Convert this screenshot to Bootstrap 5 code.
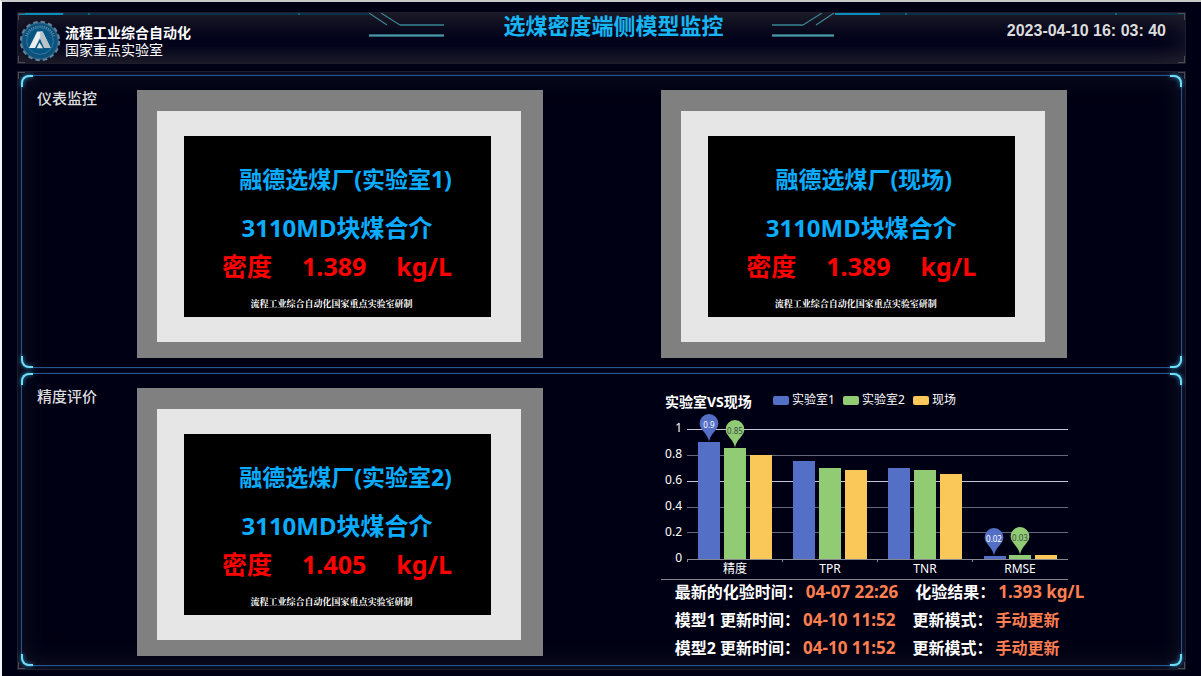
<!DOCTYPE html>
<html lang="zh-CN">
<head>
<meta charset="utf-8">
<meta name="viewport" content="width=device-width, initial-scale=1">
<title>选煤密度端侧模型监控</title>
<link href="https://cdn.jsdelivr.net/npm/bootstrap@5.3.0/dist/css/bootstrap.min.css" rel="stylesheet">
<style>
  body {
    background: #000014;
    color: #fff;
    font-family: "Noto Sans", "Noto Sans CJK SC", sans-serif;
    border-top: 2px solid #c9cacc;
    border-left: 2px solid #f4f5f5;
  }
  .screen-page { padding: 10px 15px 7px; gap: 7px; }

  /* framed areas with a faint inner glow */
  .glow-frame {
    border: 1px solid #1d1d2b;
    box-shadow: inset 0 0 28px rgba(50, 50, 66, .5);
    position: relative;
  }
  .glow-frame::before {
    content: "";
    position: absolute;
    inset: 0;
    pointer-events: none;
    --c: #4b4b55;
    background:
      linear-gradient(var(--c), var(--c)) 0 0 / 7px 1px, linear-gradient(var(--c), var(--c)) 0 0 / 1px 7px,
      linear-gradient(var(--c), var(--c)) 100% 0 / 7px 1px, linear-gradient(var(--c), var(--c)) 100% 0 / 1px 7px,
      linear-gradient(var(--c), var(--c)) 0 100% / 7px 1px, linear-gradient(var(--c), var(--c)) 0 100% / 1px 7px,
      linear-gradient(var(--c), var(--c)) 100% 100% / 7px 1px, linear-gradient(var(--c), var(--c)) 100% 100% / 1px 7px;
    background-repeat: no-repeat;
  }

  .top-bar {
    height: 52px;
    background: linear-gradient(#131320, #02021a 50%, #02021a 65%, #131320);
  }
  .bar-side { flex: 1 1 0; }
  .bar-left, .bar-right {
    background:
      linear-gradient(#0a8fbd, #0a8fbd) 0 0 / 45px 2px,
      linear-gradient(#0d6584, #0d6584) 70px 0 / 2px 2px,
      linear-gradient(#0d6584, #0d6584) 280px 0 / 2px 2px,
      linear-gradient(#0b3146, #0b3146) 0 0 / 100% 2px;
    background-repeat: no-repeat;
  }
  .brand-name { font-size: 14px; line-height: 17px; }
  .brand-text { padding-top: 11px; }
  .brand-logo { margin: 7px 4px 0 1px; }
  .bar-title { font-size: 22px; line-height: 24px; color: #16b6f4; margin: 0 48px 0 60px; }
  .bar-clock {
    font: bold 16px/20px "Liberation Sans", Arial, sans-serif;
    color: #dcdcdc;
    padding: 8px 19px 0 0;
  }

  .board { padding: 3px; gap: 5px; }
  .panel-box {
    position: relative;
    border: 1px solid #265590;
    border-radius: 8px;
    padding: 14px 0 9px;
    box-shadow: 0 0 2px #12305c;
  }
  .panel-box > .row { margin: 0 -4px 0 -2px; }
  .corner {
    position: absolute;
    width: 12px;
    height: 12px;
    border: 0 solid #6fdcf5;
    filter: drop-shadow(0 0 2px #2fa6cf);
  }
  .corner-tl { left: -1px; top: -1px; border-width: 2px 0 0 2px; border-top-left-radius: 8px; }
  .corner-tr { right: -1px; top: -1px; border-width: 2px 2px 0 0; border-top-right-radius: 8px; }
  .corner-bl { left: -1px; bottom: -1px; border-width: 0 0 2px 2px; border-bottom-left-radius: 8px; }
  .corner-br { right: -1px; bottom: -1px; border-width: 0 2px 2px 0; border-bottom-right-radius: 8px; }

  .col-tag { flex: 0 0 10%; }
  .col-unit { flex: 0 0 45%; }
  .panel-name { font-size: 15px; line-height: 16px; color: #dcdcdc; padding-left: 17px; }

  /* instrument housing */
  .meter { max-width: 406px; background: #808080; padding: 21px 22px 16px 20px; }
  .meter-bezel { background: #e6e6e6; padding: 25px 30px 25px 27px; }
  .meter-lcd { background: #000; height: 181px; padding-top: 24px; white-space: nowrap; }
  .lcd-site { font-size: 23px; line-height: 38px; color: #0aacff; padding-left: 5px; }
  .lcd-site-lab { padding-left: 17px; }
  .lcd-item { font-size: 24px; line-height: 38px; color: #0aacff; padding-top: 11px; }
  .lcd-value { font-size: 25px; line-height: 38px; color: #f00; gap: 30px; }
  .lcd-maker { font-size: 9px; line-height: 14px; font-family: "Noto Serif CJK SC", "Liberation Serif", "Noto Sans CJK SC", serif; padding-top: 12px; padding-right: 11px; }

  .chart-wrap { max-width: 407px; border-bottom: 1px solid #85858a; }
  .chart-wrap svg { width: 100%; height: auto; }
  .run-info { font-size: 16px; line-height: 28px; padding-left: 14px; white-space: nowrap; margin-top: -2px; margin-bottom: -10px; }
  .run-info .val { font-size: 17px; color: #ff7f50; margin-left: 3px; }
  .run-info .val-mode { font-size: 16px; }
  .run-info .pair { margin-right: 17px; }
</style>
</head>
<body>
<div class="screen-page d-flex flex-column">

  <header class="glow-frame top-bar d-flex">
    <div class="bar-side bar-left d-flex align-items-start">
      <svg class="brand-logo flex-shrink-0" width="42" height="42" viewBox="0 0 42 42" aria-hidden="true">
        <circle cx="21" cy="21" r="19" fill="#0b4a70"/>
        <circle cx="21" cy="21" r="19" fill="none" stroke="#63819a" stroke-width="2.4" stroke-dasharray="4.5 2.96"/>
        <circle cx="21" cy="21" r="18" fill="#0b527c" stroke="#42708f" stroke-width=".8"/>
        <path d="M7 16A15 15 0 0 1 35 16" fill="none" stroke="#7ea5bb" stroke-width="1.800" stroke-dasharray="1 1.200" stroke-opacity=".8"/>
        <circle cx="21" cy="21" r="13.400" fill="#075582" stroke="#4b83a3" stroke-width=".7"/>
        <path d="M18.200 11.500h5.400l8 16.500h-6.300L21 18.300 16 28H10z" fill="#e9edf0"/>
        <path d="M21 18.300 25.300 28h6.300L23.600 11.500h-2.200z" fill="#b9c3ca"/>
        <path d="M20.500 22.500 24 28.200H17.600z" fill="#dfe5e9"/>
      </svg>
      <div class="brand-text">
        <div class="brand-name fw-bold">流程工业综合自动化</div>
        <div class="brand-name">国家重点实验室</div>
      </div>
    </div>
    <svg class="flex-shrink-0" width="75" height="26" viewBox="0 0 75 26" fill="none" aria-hidden="true">
      <path d="M0 0 18 12M12 0 31 12" stroke="#3e8391" stroke-width="1.200"/>
      <path d="M31 12H75" stroke="#2c6576" stroke-width="2"/>
      <path d="M0 22.500H75" stroke="#2c6576" stroke-width="3"/>
      <path d="M0 22.500H75" stroke="#4b96a2"/>
    </svg>
    <h1 class="bar-title fw-bold flex-shrink-0">选煤密度端侧模型监控</h1>
    <svg class="flex-shrink-0" width="63" height="26" viewBox="0 0 63 26" fill="none" aria-hidden="true">
      <path d="M62 0 44 12M50 0 31 12" stroke="#3e8391" stroke-width="1.200"/>
      <path d="M0 12H31" stroke="#2c6576" stroke-width="2"/>
      <path d="M0 22.500H62" stroke="#2c6576" stroke-width="3"/>
      <path d="M0 22.500H62" stroke="#4b96a2"/>
    </svg>
    <div class="bar-side bar-right text-end">
      <time class="bar-clock d-block" datetime="2023-04-10T16:03:40">2023-04-10 16: 03: 40</time>
    </div>
  </header>

  <main class="glow-frame board d-flex flex-column">
    <section class="panel-box">
      <span class="corner corner-tl"></span><span class="corner corner-tr"></span><span class="corner corner-bl"></span><span class="corner corner-br"></span>
      <div class="row g-0">
        <div class="col-tag"><h2 class="panel-name m-0">仪表监控</h2></div>
        <div class="col-unit">
          <div class="meter"><div class="meter-bezel"><div class="meter-lcd text-center fw-bold">
            <div class="lcd-site lcd-site-lab">融德选煤厂(实验室1)</div>
            <div class="lcd-item">3110MD块煤合介</div>
            <div class="lcd-value d-flex justify-content-center"><span>密度</span><span>1.389</span><span>kg/L</span></div>
            <div class="lcd-maker">流程工业综合自动化国家重点实验室研制</div>
          </div></div></div>
        </div>
        <div class="col-unit">
          <div class="meter"><div class="meter-bezel"><div class="meter-lcd text-center fw-bold">
            <div class="lcd-site">融德选煤厂(现场)</div>
            <div class="lcd-item">3110MD块煤合介</div>
            <div class="lcd-value d-flex justify-content-center"><span>密度</span><span>1.389</span><span>kg/L</span></div>
            <div class="lcd-maker">流程工业综合自动化国家重点实验室研制</div>
          </div></div></div>
        </div>
      </div>
    </section>

    <section class="panel-box">
      <span class="corner corner-tl"></span><span class="corner corner-tr"></span><span class="corner corner-bl"></span><span class="corner corner-br"></span>
      <div class="row g-0">
        <div class="col-tag"><h2 class="panel-name m-0">精度评价</h2></div>
        <div class="col-unit">
          <div class="meter"><div class="meter-bezel"><div class="meter-lcd text-center fw-bold">
            <div class="lcd-site lcd-site-lab">融德选煤厂(实验室2)</div>
            <div class="lcd-item">3110MD块煤合介</div>
            <div class="lcd-value d-flex justify-content-center"><span>密度</span><span>1.405</span><span>kg/L</span></div>
            <div class="lcd-maker">流程工业综合自动化国家重点实验室研制</div>
          </div></div></div>
        </div>
        <div class="col-unit">
          <div class="chart-wrap">
            <svg class="d-block" viewBox="0 0 407 191" font-size="12" fill="#fff" role="img" aria-label="实验室VS现场">
              <text x="4" y="19" font-size="14" font-weight="bold">实验室VS现场</text>
              <rect x="112" y="8" width="16" height="9" rx="2" fill="#5470c6"/><text x="131" y="16">实验室1</text>
              <rect x="182" y="8" width="16" height="9" rx="2" fill="#91cc75"/><text x="201" y="16">实验室2</text>
              <rect x="252" y="8" width="16" height="9" rx="2" fill="#fac858"/><text x="271" y="16">现场</text>
              <g shape-rendering="crispEdges">
                <path d="M26 41.500H407M26 93.500H407" stroke="#c3c8d4"/>
                <path d="M26 67.500H407M26 119.500H407M26 144.500H407" stroke="#646977"/>
                <g fill="#5470c6">
                  <rect x="37" y="54" width="22" height="117"/><rect x="132" y="73" width="22" height="98"/><rect x="227" y="80" width="22" height="91"/><rect x="323" y="168" width="22" height="3"/>
                </g>
                <g fill="#91cc75">
                  <rect x="63" y="60" width="22" height="111"/><rect x="158" y="80" width="22" height="91"/><rect x="253" y="82" width="22" height="89"/><rect x="348" y="167" width="22" height="4"/>
                </g>
                <g fill="#fac858">
                  <rect x="89" y="67" width="22" height="104"/><rect x="184" y="82" width="22" height="89"/><rect x="279" y="86" width="22" height="85"/><rect x="374" y="167" width="22" height="4"/>
                </g>
                <path d="M26 171.500H407M26.500 171v3M121.500 171v3M216.500 171v3M311.500 171v3" stroke="#85888f"/>
              </g>
              <g text-anchor="end">
                <text x="21" y="44">1</text><text x="21" y="70">0.8</text><text x="21" y="96">0.6</text><text x="21" y="122">0.4</text><text x="21" y="148">0.2</text><text x="21" y="174">0</text>
              </g>
              <g text-anchor="middle">
                <text x="74" y="185">精度</text><text x="169" y="185">TPR</text><text x="264" y="185">TNR</text><text x="359" y="185">RMSE</text>
              </g>
              <defs><path id="pin" d="M0 0C-.7-5-3-7.500-6.200-11.500A9.400 9.400 0 1 1 6.200-11.500C3-7.500.7-5 0 0z"/></defs>
              <use href="#pin" x="48" y="54" fill="#5470c6"/><use href="#pin" x="74" y="60" fill="#91cc75"/>
              <use href="#pin" x="333" y="168" fill="#5470c6"/><use href="#pin" x="359" y="167" fill="#91cc75"/>
              <g font-size="8" text-anchor="middle">
                <text x="48" y="40">0.9</text><text x="74" y="46" fill="#3d4a4a">0.85</text><text x="333" y="154">0.02</text><text x="359" y="153" fill="#3d4a4a">0.03</text>
              </g>
            </svg>
          </div>
          <div class="run-info fw-bold">
            <div><span class="pair">最新的化验时间：<span class="val">04-07 22:26</span></span><span>化验结果：<span class="val">1.393 kg/L</span></span></div>
            <div><span class="pair">模型1 更新时间：<span class="val">04-10 11:52</span></span><span>更新模式：<span class="val val-mode">手动更新</span></span></div>
            <div><span class="pair">模型2 更新时间：<span class="val">04-10 11:52</span></span><span>更新模式：<span class="val val-mode">手动更新</span></span></div>
          </div>
        </div>
      </div>
    </section>
  </main>
</div>
<script src="https://cdn.jsdelivr.net/npm/bootstrap@5.3.0/dist/js/bootstrap.bundle.min.js"></script>
</body>
</html>
